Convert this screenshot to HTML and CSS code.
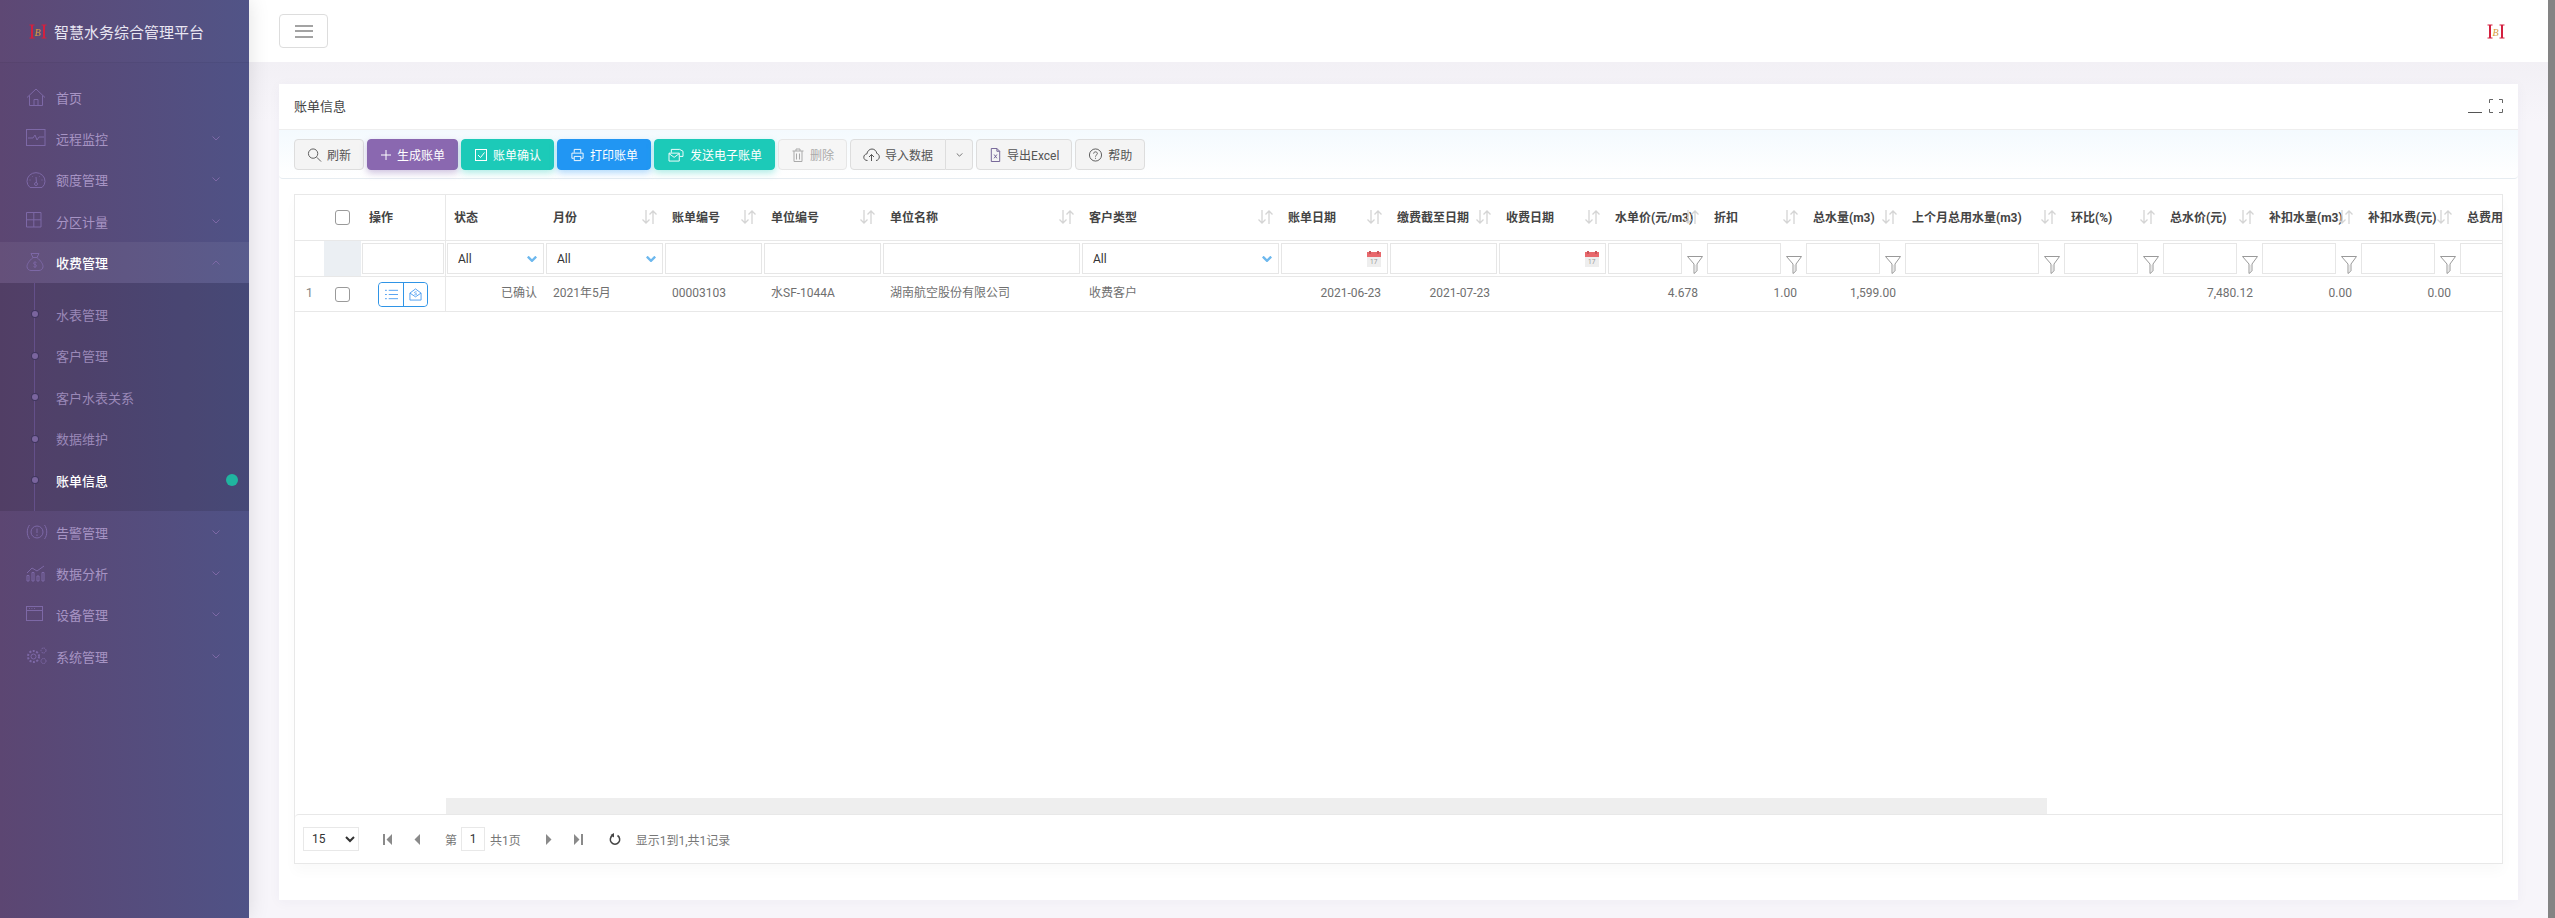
FILE: index.html
```html
<!DOCTYPE html>
<html lang="zh-CN">
<head>
    <meta charset="UTF-8">
    <title>智慧水务综合管理平台</title>
    <link rel="stylesheet" href="styles.css">
</head>
<body>
    <svg class="sprite" xmlns="http://www.w3.org/2000/svg">
        <symbol id="chev" viewBox="0 0 8 5"><path d="M.5.5 4 4 7.5.5" fill="none" stroke="currentColor"/></symbol>
        <symbol id="sort" viewBox="0 0 15 14"><path d="M4 0v13M.5 9.5 4 13l3.500-3.500M11 14V1M7.500 4.500 11 1l3.500 3.500" fill="none" stroke="currentColor" stroke-width="1.300"/></symbol>
        <symbol id="funnel" viewBox="0 0 16 18"><path d="M.5.500h15L10 8v7l-3 2.500V8z" fill="#fff" stroke="#999"/><path d="M9 9v7" stroke="#ccc"/></symbol>
        <symbol id="cal" viewBox="0 0 14 16"><rect y="1" width="14" height="15" fill="#eee"/><rect y="1" width="14" height="5" fill="#e8686c"/><rect x="2" width="2" height="3" fill="#c9555a"/><rect x="10" width="2" height="3" fill="#c9555a"/><text x="3" y="13" font-size="6.500" font-family="Roboto" fill="#999">17</text></symbol>
        <symbol id="logo" viewBox="0 0 18 15"><path d="M.5 1h5M.5 14h5M12.500 1h5M12.500 14h5" fill="none" stroke="#d3203f"/><path d="M3 1v13M15 1v13" fill="none" stroke="#d3203f" stroke-width="2"/><text x="5.500" y="11.500" font-size="10" font-style="italic" font-family="Liberation Serif" fill="#d79a3c">B</text></symbol>
    </svg>

    <aside class="sidebar">
        <div class="brand">
            <svg class="brand-logo"><use href="#logo"/></svg>
            <span>智慧水务综合管理平台</span>
        </div>
        <nav class="menu">
            <a class="menu-item">
                <svg class="menu-icon" viewBox="0 0 20 18"><path d="M1 9.500 10 1l9 8.500M3.500 7.500v10h13v-10M8 17.500v-6h4v6"/></svg>
                <span>首页</span>
            </a>
            <a class="menu-item">
                <svg class="menu-icon" viewBox="0 0 20 18"><rect x=".5" y=".5" width="18.500" height="16"/><path d="M2 9h5l2-3 2 5 2-3h5"/></svg>
                <span>远程监控</span>
                <svg class="menu-chev"><use href="#chev"/></svg>
            </a>
            <a class="menu-item">
                <svg class="menu-icon" viewBox="0 0 20 18"><path d="M4 16.500a9 8.500 0 1 1 12 0zM10 6l.5 6M3.500 9h1M15.500 9h1M6 5l.5.5M14 5l-.5.5"/><circle cx="10" cy="13" r="1.500"/></svg>
                <span>额度管理</span>
                <svg class="menu-chev"><use href="#chev"/></svg>
            </a>
            <a class="menu-item">
                <svg class="menu-icon" viewBox="0 0 20 18"><path d="M.5.5h14.500v14.500H.5zM7.800.5V15M.5 7.800H15"/></svg>
                <span>分区计量</span>
                <svg class="menu-chev"><use href="#chev"/></svg>
            </a>
            <a class="menu-item active-group">
                <svg class="menu-icon" viewBox="0 0 20 18"><path d="M5 .5h8l-2 4H7zM7 4.500C3 8 1 11 1 13.500 1 16 3 17.500 5 17.500h8c2 0 4-1.500 4-4C17 11 15 8 11 4.500z"/><path d="M10.500 9.500c-1-.8-3-.5-3 .8s3 1 3 2.400-2 1.600-3 .8M9 8.500v6.500" stroke-width=".8"/></svg>
                <span>收费管理</span>
                <svg class="menu-chev chev-up"><use href="#chev"/></svg>
            </a>
            <div class="submenu">
                <a class="sub-item"><span>水表管理</span></a>
                <a class="sub-item"><span>客户管理</span></a>
                <a class="sub-item"><span>客户水表关系</span></a>
                <a class="sub-item"><span>数据维护</span></a>
                <a class="sub-item current"><span>账单信息</span><i class="current-dot"></i></a>
            </div>
            <a class="menu-item">
                <svg class="menu-icon icon-wide" viewBox="0 0 22 16"><circle cx="11" cy="8" r="6"/><path d="M11 4.500v4.500M11 10.500v1.500M3.500 1C.5 5 .5 11 3.500 15M18.500 1c3 4 3 10 0 14"/></svg>
                <span>告警管理</span>
                <svg class="menu-chev"><use href="#chev"/></svg>
            </a>
            <a class="menu-item">
                <svg class="menu-icon" viewBox="0 0 20 18"><path d="M1 9l5-5 5 3 7-5M1 11.500h2v5.500H1zM6 8.500h2V17H6zM11 12h2v5h-2zM16 8.500h2V17h-2z"/></svg>
                <span>数据分析</span>
                <svg class="menu-chev"><use href="#chev"/></svg>
            </a>
            <a class="menu-item">
                <svg class="menu-icon" viewBox="0 0 20 18"><rect x=".5" y=".5" width="16" height="14"/><path d="M.5 4.500h16M3 2.500h.8M5.500 2.500h.8M8 2.500h.8"/></svg>
                <span>设备管理</span>
                <svg class="menu-chev"><use href="#chev"/></svg>
            </a>
            <a class="menu-item">
                <svg class="menu-icon icon-wide" viewBox="0 0 22 18"><circle cx="7.500" cy="9.500" r="5.500" stroke-width="2" stroke-dasharray="2 1.500"/><circle cx="7.500" cy="9.500" r="2.500"/><circle cx="17.500" cy="3.500" r="2.500" stroke-dasharray="1.500 .8"/><circle cx="17.500" cy="14" r="2.500" stroke-dasharray="1.500 .8"/></svg>
                <span>系统管理</span>
                <svg class="menu-chev"><use href="#chev"/></svg>
            </a>
        </nav>
    </aside>

    <main class="main">
        <header class="topbar">
            <button class="menu-toggle"><i></i><i></i><i></i></button>
            <svg class="top-logo"><use href="#logo"/></svg>
        </header>

        <section class="content">
            <div class="card">
                <div class="card-title">
                    <span>账单信息</span>
                    <div class="card-tools">
                        <i class="tool-min"></i>
                        <svg class="tool-full" viewBox="0 0 14 14"><path d="M.5 4V.5H4M10 .5h3.500V4M13.500 10v3.500H10M4 13.500H.5V10"/></svg>
                    </div>
                </div>

                <div class="toolbar">
                    <button class="btn">
                        <svg class="btn-icon w15" viewBox="0 0 15 15"><circle cx="6" cy="6" r="5"/><path d="M10 10l4.500 4.500"/></svg>刷新
                    </button>
                    <button class="btn btn-purple">
                        <svg class="btn-icon w12" viewBox="0 0 12 12"><path d="M6 1v10M1 6h10"/></svg>生成账单
                    </button>
                    <button class="btn btn-teal">
                        <svg class="btn-icon w14" viewBox="0 0 14 14"><rect x="1.500" y="1.500" width="11" height="11"/><path d="M4 7l2.500 2.500 4-5"/></svg>账单确认
                    </button>
                    <button class="btn btn-blue">
                        <svg class="btn-icon w15" viewBox="0 0 15 15"><path d="M4 5V1.500h7V5M3.500 11H1.500V5.500h12V11h-2M4 9h7v4.500H4z"/></svg>打印账单
                    </button>
                    <button class="btn btn-teal">
                        <svg class="btn-icon w18" viewBox="0 0 18 15"><path d="M4 5V1.500h9l3.500 2V9H13M1.500 5.500h11V14h-11zM1.500 6l5.500 4 5.500-4"/></svg>发送电子账单
                    </button>
                    <button class="btn btn-off">
                        <svg class="btn-icon w14" viewBox="0 0 14 14"><path d="M1.500 3h11M5 3V1h4v2M3 3v10.500h8V3M5.500 5.500v6M8.500 5.500v6"/></svg>删除
                    </button>
                    <div class="btn-split">
                        <button class="btn">
                            <svg class="btn-icon w17" viewBox="0 0 17 14"><path d="M4.500 12.500C2 12.500 .8 11 .8 9.200S2.200 6 3.800 6C4.300 3 6.500 1 9 1s4.500 2 4.800 4.500c1.500.2 2.500 1.700 2.500 3.400s-1.300 3.600-3.300 3.600M8.500 13V6.500M6 9l2.500-2.500L11 9"/></svg>导入数据
                        </button>
                        <button class="btn btn-caret"><svg class="caret"><use href="#chev"/></svg></button>
                    </div>
                    <button class="btn">
                        <svg class="btn-icon w13 icon-purple" viewBox="0 0 13 15"><path d="M2 .5h6L11 3.500v11H2zM8 .5v3h3M5 7l3 4M8 7l-3 4"/></svg>导出Excel
                    </button>
                    <button class="btn">
                        <svg class="btn-icon w15" viewBox="0 0 15 15"><circle cx="7.500" cy="7.500" r="6.500"/><path d="M5.500 6c0-2.500 4-2.500 4 0 0 1.500-2 1.500-2 3.200M7.500 10.500v1"/></svg>帮助
                    </button>
                </div>

                <div class="card-body">
                    <div class="grid-panel">
                        <div class="grid-clip">
                            <table class="grid">
                                <colgroup>
                                    <col class="w29"><col class="w37"><col class="w85"><col class="w99"><col class="w119">
                                    <col class="w99"><col class="w119"><col class="w199"><col class="w199"><col class="w109">
                                    <col class="w109"><col class="w109"><col class="w99"><col class="w99"><col class="w99">
                                    <col class="w159"><col class="w99"><col class="w99"><col class="w99"><col class="w99"><col class="w99">
                                </colgroup>
                                <thead>
                                    <tr class="head-row">
                                        <th></th>
                                        <th class="center"><input type="checkbox" class="check"></th>
                                        <th class="split">操作</th>
                                        <th>状态</th>
                                        <th>月份<svg class="sort"><use href="#sort"/></svg></th>
                                        <th>账单编号<svg class="sort"><use href="#sort"/></svg></th>
                                        <th>单位编号<svg class="sort"><use href="#sort"/></svg></th>
                                        <th>单位名称<svg class="sort"><use href="#sort"/></svg></th>
                                        <th>客户类型<svg class="sort"><use href="#sort"/></svg></th>
                                        <th>账单日期<svg class="sort"><use href="#sort"/></svg></th>
                                        <th>缴费截至日期<svg class="sort"><use href="#sort"/></svg></th>
                                        <th>收费日期<svg class="sort"><use href="#sort"/></svg></th>
                                        <th>水单价(元/m3)<svg class="sort"><use href="#sort"/></svg></th>
                                        <th>折扣<svg class="sort"><use href="#sort"/></svg></th>
                                        <th>总水量(m3)<svg class="sort"><use href="#sort"/></svg></th>
                                        <th>上个月总用水量(m3)<svg class="sort"><use href="#sort"/></svg></th>
                                        <th>环比(%)<svg class="sort"><use href="#sort"/></svg></th>
                                        <th>总水价(元)<svg class="sort"><use href="#sort"/></svg></th>
                                        <th>补扣水量(m3)<svg class="sort"><use href="#sort"/></svg></th>
                                        <th>补扣水费(元)<svg class="sort"><use href="#sort"/></svg></th>
                                        <th>总费用<svg class="sort"><use href="#sort"/></svg></th>
                                    </tr>
                                    <tr class="filter-row">
                                        <td></td>
                                        <td class="filter-gray"></td>
                                        <td class="split"><div class="fbox"></div></td>
                                        <td><div class="fbox">All<svg class="fchev"><use href="#chev"/></svg></div></td>
                                        <td><div class="fbox">All<svg class="fchev"><use href="#chev"/></svg></div></td>
                                        <td><div class="fbox"></div></td>
                                        <td><div class="fbox"></div></td>
                                        <td><div class="fbox"></div></td>
                                        <td><div class="fbox">All<svg class="fchev"><use href="#chev"/></svg></div></td>
                                        <td><div class="fbox"><svg class="fcal"><use href="#cal"/></svg></div></td>
                                        <td><div class="fbox"></div></td>
                                        <td><div class="fbox"><svg class="fcal"><use href="#cal"/></svg></div></td>
                                        <td><div class="fnum"><div class="fbox"></div><svg class="ffunnel"><use href="#funnel"/></svg></div></td>
                                        <td><div class="fnum"><div class="fbox"></div><svg class="ffunnel"><use href="#funnel"/></svg></div></td>
                                        <td><div class="fnum"><div class="fbox"></div><svg class="ffunnel"><use href="#funnel"/></svg></div></td>
                                        <td><div class="fnum"><div class="fbox"></div><svg class="ffunnel"><use href="#funnel"/></svg></div></td>
                                        <td><div class="fnum"><div class="fbox"></div><svg class="ffunnel"><use href="#funnel"/></svg></div></td>
                                        <td><div class="fnum"><div class="fbox"></div><svg class="ffunnel"><use href="#funnel"/></svg></div></td>
                                        <td><div class="fnum"><div class="fbox"></div><svg class="ffunnel"><use href="#funnel"/></svg></div></td>
                                        <td><div class="fnum"><div class="fbox"></div><svg class="ffunnel"><use href="#funnel"/></svg></div></td>
                                        <td><div class="fnum"><div class="fbox"></div><svg class="ffunnel"><use href="#funnel"/></svg></div></td>
                                    </tr>
                                </thead>
                                <tbody>
                                    <tr class="data-row">
                                        <td class="row-no">1</td>
                                        <td class="center"><input type="checkbox" class="check"></td>
                                        <td class="split center">
                                            <div class="row-actions">
                                                <button><svg viewBox="0 0 14 12"><path d="M4 1.500h10M4 6h10M4 10.500h10M0 1.500h2M0 6h2M0 10.500h2"/></svg></button>
                                                <button><svg viewBox="0 0 14 14"><path d="M1 5.500 7 1l6 4.500V13H1zM1 5.500l6 4 6-4"/><path d="M8.300 4.300c-.6-.5-2.400-.4-2.400.6s2.400.6 2.400 1.600-1.800 1-2.400.5" stroke-width=".8"/></svg></button>
                                            </div>
                                        </td>
                                        <td class="right">已确认</td>
                                        <td>2021年5月</td>
                                        <td>00003103</td>
                                        <td>水SF-1044A</td>
                                        <td>湖南航空股份有限公司</td>
                                        <td>收费客户</td>
                                        <td class="right">2021-06-23</td>
                                        <td class="right">2021-07-23</td>
                                        <td></td>
                                        <td class="right">4.678</td>
                                        <td class="right">1.00</td>
                                        <td class="right">1,599.00</td>
                                        <td></td>
                                        <td></td>
                                        <td class="right">7,480.12</td>
                                        <td class="right">0.00</td>
                                        <td class="right">0.00</td>
                                        <td></td>
                                    </tr>
                                </tbody>
                            </table>
                        </div>
                        <div class="hscroll"></div>
                        <div class="pager">
                            <select class="page-size"><option>15</option><option>30</option></select>
                            <button class="page-btn first-btn"><svg viewBox="0 0 9 11"><path d="M0 0h2v11H0zM9 0v11L3.500 5.500z"/></svg></button>
                            <button class="page-btn"><svg viewBox="0 0 9 11"><path d="M7 0v11L1.500 5.500z"/></svg></button>
                            <span class="page-word">第</span>
                            <input class="page-input" value="1">
                            <span class="page-total">共1页</span>
                            <button class="page-btn next-btn"><svg viewBox="0 0 9 11"><path d="M2 0v11l5.500-5.500z"/></svg></button>
                            <button class="page-btn"><svg viewBox="0 0 9 11"><path d="M0 0v11l5.500-5.500zM7 0h2v11H7z"/></svg></button>
                            <button class="page-btn reload-btn"><svg viewBox="0 0 12 12"><path d="M3.500 2.500a4.700 4.700 0 1 0 5 0" fill="none" stroke="#444" stroke-width="1.500"/><path d="M5 0v4.500L1.500 2z" fill="#444"/></svg></button>
                            <span class="page-info">显示1到1,共1记录</span>
                        </div>
                    </div>
                </div>
            </div>
        </section>
    </main>

    <div class="page-scrollbar"></div>
</body>
</html>
```

FILE: styles.css
```css
* {
    margin: 0;
    padding: 0;
    box-sizing: border-box;
}

html, body {
    height: 100%;
}

body {
    display: flex;
    overflow: hidden;
    font-family: Roboto, "Noto Sans CJK SC", sans-serif;
    font-size: 12px;
    color: #666;
    background: #f6f4f9;
}

.sprite {
    display: none;
}

/* sidebar */
.sidebar {
    width: 249px;
    flex-shrink: 0;
    background: linear-gradient(90deg, #5c4672 0%, #4f5286 100%);
    box-shadow: 0 0 20px rgba(0, 0, 0, 0.12);
    position: relative;
    z-index: 2;
}

.brand {
    height: 62px;
    display: flex;
    align-items: center;
    padding-left: 29px;
    gap: 7px;
    font-size: 15px;
    color: #e9e6f2;
    background: rgba(255, 255, 255, 0.015);
    box-shadow: 0 1px 0 rgba(0, 0, 0, 0.04);
}

.brand-logo {
    width: 18px;
    height: 15px;
}

.menu {
    padding-top: 14.5px;
    font-size: 13px;
    color: #a794c4;
}

.menu-item {
    height: 41.3px;
    display: flex;
    align-items: center;
    padding: 0 29px 0 26px;
}

.menu-icon {
    width: 20px;
    height: 18px;
    margin-right: 10px;
    fill: none;
    stroke: #7d68a6;
    stroke-width: 1;
}

.icon-wide {
    width: 22px;
    margin-right: 8px;
}

.menu-chev {
    width: 8px;
    height: 5px;
    margin-left: auto;
    color: #7d68a6;
}

.chev-up {
    transform: rotate(180deg);
}

.active-group {
    background: rgba(255, 255, 255, 0.06);
    color: #fff;
    font-weight: 500;
}

.submenu {
    position: relative;
    padding: 10.5px 0 10.5px;
    background: rgba(0, 0, 0, 0.11);
    color: #9a88b8;
}

.submenu::before {
    content: "";
    position: absolute;
    left: 34px;
    top: 0;
    bottom: 0;
    width: 1px;
    background: #64508a;
}

.sub-item {
    height: 41.5px;
    display: flex;
    align-items: center;
    padding-left: 56px;
    position: relative;
}

.sub-item::before {
    content: "";
    position: absolute;
    left: 32px;
    top: 50%;
    width: 6px;
    height: 6px;
    margin-top: -3px;
    border-radius: 50%;
    background: #7a659e;
    box-shadow: 0 0 0 1px #41365f;
}

.current {
    color: #fff;
    font-weight: 500;
}

.current-dot {
    position: absolute;
    left: 226px;
    top: 50%;
    width: 12px;
    height: 12px;
    margin-top: -6px;
    border-radius: 50%;
    background: #20b5a0;
}

/* top bar */
.main {
    flex: 1;
    display: flex;
    flex-direction: column;
    min-width: 0;
}

.topbar {
    height: 62px;
    display: flex;
    align-items: center;
    justify-content: space-between;
    padding: 0 43px 0 30px;
    background: #fff;
    box-shadow: 0 2px 8px rgba(0, 0, 0, 0.03);
}

.menu-toggle {
    width: 49px;
    height: 34px;
    display: flex;
    flex-direction: column;
    align-items: center;
    justify-content: center;
    gap: 3.500px;
    background: #fff;
    border: 1px solid #ddd;
    border-radius: 4px;
}

.menu-toggle i {
    width: 18px;
    height: 2px;
    background: #a3a3a3;
}

.top-logo {
    width: 18px;
    height: 15px;
}

.content {
    flex: 1;
    padding: 22px 30px 18px;
    background: linear-gradient(180deg, #f2f0f5 0, #f7f5fa 60px);
}

/* card */
.card {
    height: 100%;
    display: flex;
    flex-direction: column;
    background: #fff;
    box-shadow: 0 2px 12px rgba(60, 50, 90, 0.04);
}

.card-title {
    height: 46px;
    flex-shrink: 0;
    display: flex;
    align-items: center;
    justify-content: space-between;
    padding: 0 15px 2px;
    font-size: 13px;
    color: #444;
    border-bottom: 1px solid #eee;
}

.card-tools {
    display: flex;
    align-items: center;
    gap: 7px;
}

.tool-min {
    width: 14px;
    height: 1px;
    margin-top: 13px;
    background: #555;
}

.tool-full {
    width: 14px;
    height: 14px;
    fill: none;
    stroke: #666;
}

.toolbar {
    height: 49px;
    flex-shrink: 0;
    display: flex;
    align-items: flex-start;
    gap: 3px;
    padding: 9px 15px 0;
    background: linear-gradient(180deg, #f4fafe 0%, #fff 100%);
    border-bottom: 1px solid #e6ecf1;
    border-radius: 0 0 4px 4px;
}

.btn {
    height: 31px;
    display: flex;
    align-items: center;
    gap: 5px;
    padding: 0 12px;
    font: inherit;
    color: #555;
    background: #f4f4f4;
    border: 1px solid #ddd;
    border-radius: 4px;
    white-space: nowrap;
}

.btn-icon {
    height: 14px;
    flex-shrink: 0;
    fill: none;
    stroke: currentColor;
    stroke-width: 1;
}

.w12 { width: 12px; }
.w13 { width: 13px; }
.w14 { width: 14px; }
.w15 { width: 15px; }
.w17 { width: 17px; }
.w18 { width: 18px; }

.icon-purple {
    stroke: #6b5a90;
}

.btn-purple {
    color: #fff;
    background: #8a68b0;
    border-color: #8a68b0;
    box-shadow: 0 3px 7px rgba(138, 104, 176, 0.4);
}

.btn-teal {
    color: #fff;
    background: #1ccab8;
    border-color: #1ccab8;
    box-shadow: 0 3px 7px rgba(28, 202, 184, 0.35);
}

.btn-blue {
    color: #fff;
    background: #2196f3;
    border-color: #2196f3;
    box-shadow: 0 3px 7px rgba(33, 150, 243, 0.35);
}

.btn-off {
    color: #aaa;
    background: #f6f6f6;
    border-color: #e6e6e6;
}

.btn-split {
    display: flex;
}

.btn-split .btn:first-child {
    border-radius: 4px 0 0 4px;
}

.btn-caret {
    width: 27px;
    padding: 0;
    justify-content: center;
    border-left: 0;
    border-radius: 0 4px 4px 0;
}

.caret {
    width: 7px;
    height: 4px;
}

.card-body {
    flex: 1;
    min-height: 0;
    padding: 15px 15px 36px;
}

/* grid */
.grid-panel {
    height: 100%;
    display: flex;
    flex-direction: column;
    border: 1px solid #e8e8e8;
    box-shadow: 0 8px 12px rgba(0, 0, 0, 0.025);
}

.grid-clip {
    flex: 1;
    min-height: 0;
    overflow: hidden;
}

.grid {
    width: 2263px;
    table-layout: fixed;
    border-collapse: separate;
    border-spacing: 0;
}

.w29 { width: 29px; }
.w37 { width: 37px; }
.w85 { width: 85px; }
.w99 { width: 99px; }
.w109 { width: 109px; }
.w119 { width: 119px; }
.w159 { width: 159px; }
.w199 { width: 199px; }

.grid th,
.grid td {
    border-bottom: 1px solid #e8e8e8;
    white-space: nowrap;
}

.head-row th {
    height: 46px;
    padding: 0 8px 2px;
    position: relative;
    text-align: left;
    font-weight: 700;
    color: #444;
}

.filter-row td {
    height: 36px;
    padding: 1px;
}

.data-row td {
    height: 35px;
    padding: 0 8px 2px;
    line-height: 16px;
    color: #6f6f6f;
}

.grid .center {
    padding: 0;
    text-align: center;
}

.grid .right {
    text-align: right;
}

.grid .row-no {
    text-align: center;
    font-size: 13px;
    color: #888;
}

.grid .split {
    border-right: 1px solid #e8e8e8;
}

.filter-row .filter-gray {
    background: #ebeff3;
}

.check {
    appearance: none;
    display: block;
    width: 15px;
    height: 15px;
    margin: 0 auto;
    background: #fff;
    border: 1px solid #9a9a9a;
    border-radius: 3px;
}

.sort {
    position: absolute;
    right: 7px;
    top: 50%;
    width: 15px;
    height: 14px;
    margin-top: -8px;
    color: #d4d4d4;
}

.fbox {
    height: 31px;
    display: flex;
    align-items: center;
    justify-content: space-between;
    flex: 1;
    padding: 0 6px 0 10px;
    color: #333;
    background: #fff;
    border: 1px solid #e6e6e6;
}

.fchev {
    width: 10px;
    height: 6px;
    color: #6db8ee;
    stroke-width: 2;
}

.fcal {
    width: 14px;
    height: 16px;
    margin-left: auto;
}

.fnum {
    display: flex;
    align-items: flex-end;
    gap: 5px;
    padding-right: 2px;
}

.ffunnel {
    width: 16px;
    height: 18px;
    flex-shrink: 0;
}

.row-actions {
    display: inline-flex;
    vertical-align: middle;
    height: 25px;
    border: 1px solid #2f94e6;
    border-radius: 4px;
}

.row-actions button {
    width: 24px;
    display: flex;
    align-items: center;
    justify-content: center;
    background: #fff;
    border: 0;
    border-radius: 4px;
}

.row-actions button + button {
    border-left: 1px solid #2f94e6;
    border-radius: 0 4px 4px 0;
}

.row-actions svg {
    width: 13px;
    height: 13px;
    fill: none;
    stroke: #4d9df0;
}

/* pager */
.hscroll {
    height: 16px;
    flex-shrink: 0;
    width: 1601px;
    margin-left: 151px;
    background: #eee;
}

.pager {
    height: 49px;
    flex-shrink: 0;
    display: flex;
    align-items: center;
    padding-left: 8px;
    color: #777;
    background: #fff;
    border-top: 1px solid #e8e8e8;
    border-top-left-radius: 4px;
}

.page-size {
    width: 56px;
    height: 24px;
    padding-left: 4px;
    font: inherit;
    color: #333;
    background: #fff;
    border: 1px solid #e8e8e8;
}

.page-btn {
    width: 30px;
    height: 24px;
    display: flex;
    align-items: center;
    justify-content: center;
    background: none;
    border: 0;
}

.page-btn svg {
    width: 9px;
    height: 11px;
    fill: #8a8a8a;
}

.first-btn {
    margin-left: 13px;
}

.next-btn {
    margin-left: 13px;
}

.reload-btn {
    margin-left: 6px;
}

.reload-btn svg {
    width: 12px;
    height: 12px;
}

.page-word {
    margin-left: 13px;
}

.page-input {
    width: 24px;
    height: 24px;
    margin-left: 4px;
    font: inherit;
    color: #333;
    text-align: center;
    border: 1px solid #e8e8e8;
}

.page-total {
    margin-left: 5px;
}

.page-info {
    margin-left: 6px;
}

.page-scrollbar {
    width: 7px;
    flex-shrink: 0;
    background: #848484;
}
```
